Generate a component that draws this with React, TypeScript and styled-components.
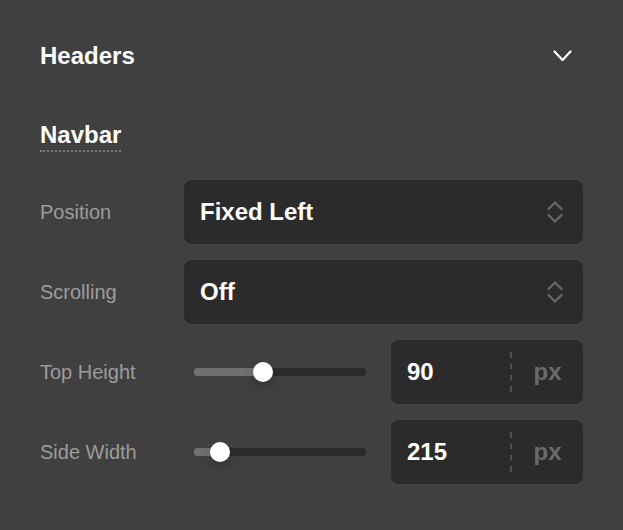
import React from 'react';
import styled, { createGlobalStyle } from 'styled-components';

const GlobalStyle = createGlobalStyle`
    html, body {
        margin: 0;
        padding: 0;
        background: #404040;
    }
    body {
        font-family: "Liberation Sans", Arial, sans-serif;
        color: #ffffff;
    }
`;

const Panel = styled.div`
    width: 623px;
    min-height: 530px;
    box-sizing: border-box;
    padding: 42px 40px 0 40px;
    background: #404040;
`;

const Header = styled.div`
    display: flex;
    align-items: center;
    justify-content: space-between;
    height: 28px;
`;

const HeaderTitle = styled.h2`
    margin: 0;
    font-size: 24px;
    line-height: 28px;
    font-weight: bold;
`;

const Chevron = styled.svg`
    margin-right: 11px;
    display: block;
`;

const SectionTitle = styled.h3`
    display: inline-block;
    margin: 51px 0 0 0;
    padding-bottom: 1px;
    font-size: 24px;
    line-height: 28px;
    font-weight: bold;
    border-bottom: 2px dotted #7a7a7a;
`;

const Rows = styled.div`
    display: flex;
    flex-direction: column;
    gap: 16px;
    margin-top: 28px;
`;

const Row = styled.div`
    display: grid;
    grid-template-columns: 144px 1fr;
    align-items: center;
    height: 64px;
`;

const Label = styled.span`
    font-size: 20px;
    color: #9c9c9c;
`;

const Select = styled.div`
    display: flex;
    align-items: center;
    justify-content: space-between;
    height: 64px;
    padding: 0 20px 0 16px;
    box-sizing: border-box;
    background: #2b2b2b;
    border-radius: 8px;
    font-size: 24px;
    font-weight: bold;
`;

const Control = styled.div`
    display: grid;
    grid-template-columns: 1fr 192px;
    align-items: center;
    height: 64px;
`;

const SliderArea = styled.div`
    padding: 0 25px 0 10px;
`;

const Track = styled.div`
    position: relative;
    height: 8px;
    border-radius: 3px;
    background: #2b2b2b;
`;

const Fill = styled.div`
    position: absolute;
    left: 0;
    top: 0;
    bottom: 0;
    border-radius: 3px 0 0 3px;
    background: #707070;
`;

const Thumb = styled.div`
    position: absolute;
    top: 50%;
    width: 20px;
    height: 20px;
    margin: -10px 0 0 -10px;
    border-radius: 50%;
    background: #ffffff;
    box-shadow: 0 6px 12px rgba(0, 0, 0, 0.18);
`;

const NumberBox = styled.div`
    display: grid;
    grid-template-columns: 1fr 2px 71px;
    align-items: center;
    height: 64px;
    background: #2b2b2b;
    border-radius: 8px;
    font-size: 24px;
    font-weight: bold;
`;

const Value = styled.span`
    padding-left: 16px;
`;

const Divider = styled.div`
    height: 40px;
    border-left: 2px dashed #505050;
`;

const Unit = styled.span`
    text-align: center;
    color: #6a6a6a;
`;

const SelectIcon = () => (
    <svg width="16" height="22" viewBox="0 0 16 22" fill="none" stroke="#6a6a6a" strokeWidth="2.2" strokeLinecap="round" strokeLinejoin="round">
        <polyline points="1.5,8 8,1.5 14.5,8" />
        <polyline points="1.5,14 8,20.5 14.5,14" />
    </svg>
);

const rows = [
    { label: 'Position', type: 'select', value: 'Fixed Left' },
    { label: 'Scrolling', type: 'select', value: 'Off' },
    { label: 'Top Height', type: 'slider', value: '90', pct: 0.39 },
    { label: 'Side Width', type: 'slider', value: '215', pct: 0.105 },
];

const App = () => {
    return (
        <>
            <GlobalStyle />
            <Panel>
                <Header>
                    <HeaderTitle>Headers</HeaderTitle>
                    <Chevron width="19" height="12" viewBox="0 0 19 12" fill="none" stroke="#ffffff" strokeWidth="2.2" strokeLinecap="round" strokeLinejoin="round">
                        <polyline points="1.5,1.5 9.5,10 17.5,1.5" />
                    </Chevron>
                </Header>
                <SectionTitle>Navbar</SectionTitle>
                <Rows>
                    {rows.map(row => (
                        <Row key={row.label}>
                            <Label>{row.label}</Label>
                            {row.type === 'select' ? (
                                <Select>
                                    <span>{row.value}</span>
                                    <SelectIcon />
                                </Select>
                            ) : (
                                <Control>
                                    <SliderArea>
                                        <Track>
                                            <Fill style={{ width: `calc(10px + ${row.pct} * (100% - 20px))` }} />
                                            <Thumb style={{ left: `calc(10px + ${row.pct} * (100% - 20px))` }} />
                                        </Track>
                                    </SliderArea>
                                    <NumberBox>
                                        <Value>{row.value}</Value>
                                        <Divider />
                                        <Unit>px</Unit>
                                    </NumberBox>
                                </Control>
                            )}
                        </Row>
                    ))}
                </Rows>
            </Panel>
        </>
    );
};

export default App;
